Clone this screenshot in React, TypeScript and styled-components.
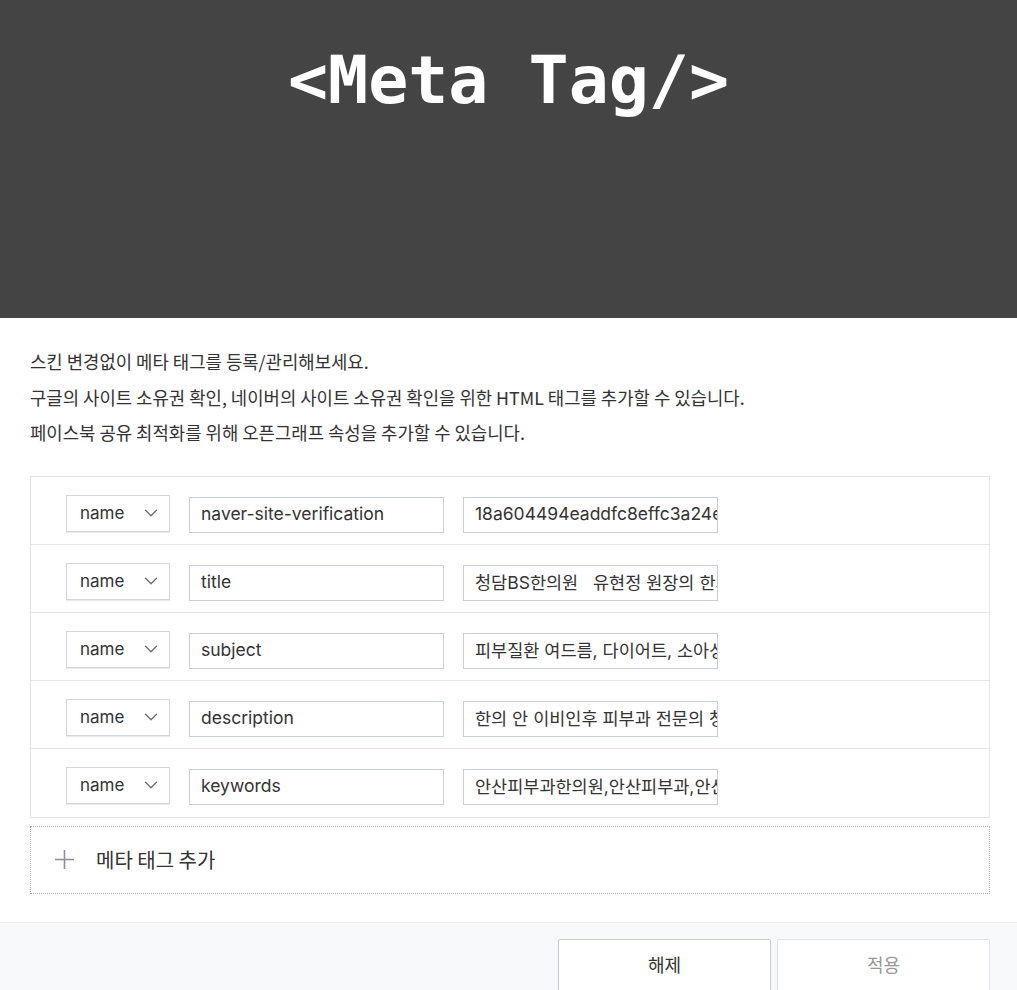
import React from 'react';
import styled, { createGlobalStyle } from 'styled-components';
import { ChevronDown } from 'lucide-react';

type MetaRow = {
  kind: string;
  key: string;
  value: string;
};

const rows: MetaRow[] = [
  { kind: 'name', key: 'naver-site-verification', value: '18a604494eaddfc8effc3a24e1c2b7d3f' },
  { kind: 'name', key: 'title', value: '청담BS한의원   유현정 원장의 한의학 피부 클리닉' },
  { kind: 'name', key: 'subject', value: '피부질환 여드름, 다이어트, 소아성장 클리닉' },
  { kind: 'name', key: 'description', value: '한의 안 이비인후 피부과 전문의 청담 BS 한의원' },
  { kind: 'name', key: 'keywords', value: '안산피부과한의원,안산피부과,안산한의원' },
];

const GlobalStyle = createGlobalStyle`
  body {
    margin: 0;
    background: #fff;
    font-family: Inter, "Noto Sans CJK KR", sans-serif;
    color: #333;
  }
`;

const PlusIcon: React.FC = () => (
  <svg width="19" height="19" viewBox="0 0 19 19">
    <path d="M9.5 0v19M0 9.5h19" stroke="#8a919c" strokeWidth="1.6" fill="none" />
  </svg>
);

const App: React.FC = () => (
  <>
    <GlobalStyle />
    <Page>
      <Hero>
        <Title>&lt;Meta Tag/&gt;</Title>
      </Hero>
      <Content>
        <Desc>
          <p>스킨 변경없이 메타 태그를 등록/관리해보세요.</p>
          <p>구글의 사이트 소유권 확인, 네이버의 사이트 소유권 확인을 위한 HTML 태그를 추가할 수 있습니다.</p>
          <p>페이스북 공유 최적화를 위해 오픈그래프 속성을 추가할 수 있습니다.</p>
        </Desc>
        <TagList>
          {rows.map(row => (
            <TagRow key={row.key}>
              <SelectBox>
                <span>{row.kind}</span>
                <ChevronDown size={22} strokeWidth={1.4} color="#6b6f76" />
              </SelectBox>
              <Field defaultValue={row.key} />
              <Field defaultValue={row.value} />
            </TagRow>
          ))}
        </TagList>
        <AddRow>
          <PlusIcon />
          <span>메타 태그 추가</span>
        </AddRow>
      </Content>
      <Footer>
        <FooterButton>해제</FooterButton>
        <FooterButton $muted>적용</FooterButton>
      </Footer>
    </Page>
  </>
);

const Page = styled.div`
  display: flex;
  flex-direction: column;
  min-height: 990px;
`;

const Hero = styled.header`
  height: 318px;
  background: #444444;
  box-sizing: border-box;
  padding-top: 47px;
  text-align: center;
`;

const Title = styled.h1`
  margin: 0;
  font-family: "DejaVu Sans Mono", monospace;
  font-weight: bold;
  font-size: 66.6px;
  line-height: 66px;
  color: #fff;
`;

const Content = styled.section`
  padding: 26px 27px 28px 30px;
`;

const Desc = styled.div`
  font-family: "Noto Sans CJK KR", sans-serif;
  font-size: 17.8px;
  line-height: 35.5px;
  color: #333;
  margin-bottom: 25px;

  p {
    margin: 0;
  }
`;

const TagList = styled.div`
  border: 1px solid #e3e5ee;
`;

const TagRow = styled.div`
  height: 68px;
  box-sizing: border-box;
  display: flex;
  align-items: flex-start;
  gap: 19px;
  padding: 18px 0 0 35px;
  border-bottom: 1px solid #e3e5ee;

  &:last-child {
    border-bottom: none;
  }
`;

const SelectBox = styled.div`
  width: 104px;
  height: 37px;
  box-sizing: border-box;
  border: 1px solid #d2d6de;
  box-shadow: 0 1px 1px rgba(0, 0, 0, 0.08);
  display: flex;
  align-items: center;
  justify-content: space-between;
  padding: 0 7px 0 13px;
  font-size: 17px;
  color: #333;
  background: #fff;
`;

const Field = styled.input`
  width: 255px;
  height: 36px;
  margin-top: 2px;
  box-sizing: border-box;
  border: 1px solid #c9cfd9;
  padding: 0 0 2px 11px;
  font-family: Inter, "Noto Sans CJK KR", sans-serif;
  font-size: 17.5px;
  color: #333;
  outline: none;
  background: #fff;
`;

const AddRow = styled.div`
  margin-top: 8px;
  height: 68px;
  box-sizing: border-box;
  border: 1px dotted #a9acb3;
  display: flex;
  align-items: center;
  gap: 22px;
  padding: 0 0 1px 24px;
  font-family: "Noto Sans CJK KR", sans-serif;
  font-size: 20px;
  color: #333;
`;

const Footer = styled.footer`
  flex: 1;
  background: #f8f9fb;
  border-top: 1px solid #eceef2;
  display: flex;
  justify-content: flex-end;
  gap: 6px;
  padding: 16px 27px 0 0;
`;

const FooterButton = styled.button<{ $muted?: boolean }>`
  width: 213px;
  height: 56px;
  background: #fff;
  border: 1px solid ${p => (p.$muted ? '#dfe2e8' : '#c5cad3')};
  border-radius: 2px;
  font-family: "Noto Sans CJK KR", sans-serif;
  font-size: 18px;
  color: ${p => (p.$muted ? '#999' : '#333')};
  padding-bottom: 6px;
  cursor: pointer;
`;

export default App;
